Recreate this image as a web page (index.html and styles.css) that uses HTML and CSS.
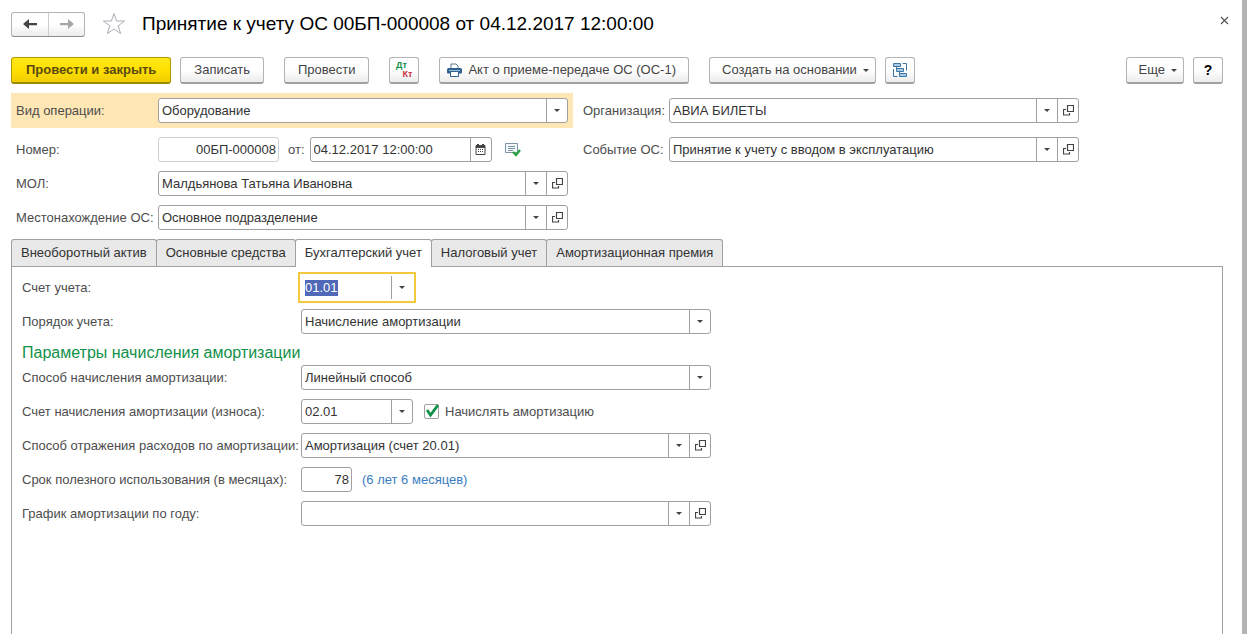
FILE: index.html
```html
<!DOCTYPE html>
<html lang="ru">
<head>
  <meta charset="UTF-8">
  <meta name="viewport" content="width=device-width, initial-scale=1.0">
  <title>Принятие к учету ОС</title>
  <link rel="stylesheet" href="styles.css">
</head>
<body>
  <svg class="sprite" aria-hidden="true">
    <symbol id="open" viewBox="0 0 11 11">
      <path d="M4.500 .5h6v6h-6z M3 4.500H.5v5.500h6V8" fill="none" stroke="#444" stroke-width="1.200"/>
    </symbol>
  </svg>

  <main class="window">
    <header class="title-bar">
      <div class="history">
        <button type="button" aria-label="Назад">
          <svg width="16" height="12" viewBox="0 0 16 12"><path d="M1 6l6-5v4h8v2.200H7V11z" fill="#444"/></svg>
        </button>
        <button type="button" aria-label="Вперед">
          <svg width="16" height="12" viewBox="0 0 16 12"><path d="M15 6L9 1v4H1v2.200h8V11z" fill="#a6a6a6"/></svg>
        </button>
      </div>
      <button type="button" class="star" aria-label="В избранное">
        <svg width="24" height="24" viewBox="0 0 24 24"><path d="M12 1.500l2.600 7.500h8l-6.400 4.800 2.400 7.800L12 17l-6.600 4.600 2.400-7.800L1.400 9h8z" fill="#fff" stroke="#a9adb5"/></svg>
      </button>
      <h1>Принятие к учету ОС 00БП-000008 от 04.12.2017 12:00:00</h1>
      <button type="button" class="close" aria-label="Закрыть">
        <svg width="9" height="9" viewBox="0 0 9 9"><path d="M1 1l7 7M8 1l-7 7" stroke="#555" stroke-width="1.200"/></svg>
      </button>
    </header>

    <div class="toolbar">
      <div class="group">
        <button type="button" class="btn primary">Провести и закрыть</button>
        <button type="button" class="btn">Записать</button>
      </div>
      <button type="button" class="btn">Провести</button>
      <button type="button" class="btn icon dtkt" aria-label="Показать проводки">
        <span class="dt">Дт</span>
        <span class="kt">Кт</span>
      </button>
      <button type="button" class="btn print">
        <svg width="15" height="14" viewBox="0 0 15 14">
          <path d="M4 6V1h5l2 2v3" fill="#fff" stroke="#5b7690"/>
          <path d="M1.500 5h12q1.500 0 1.500 1.500v3q0 1-1 1H1q-1 0-1-1v-3Q0 5 1.500 5z" fill="#2f5f8c"/>
          <path d="M3.500 8.500h8v5h-8z" fill="#fff" stroke="#2f5f8c"/>
          <path d="M2 7.500h11" stroke="#9fc0dc"/>
        </svg>
        Акт о приеме-передаче ОС (ОС-1)
      </button>
      <div class="group">
        <button type="button" class="btn menu">Создать на основании <span class="arrow"></span></button>
        <button type="button" class="btn icon" aria-label="Структура подчиненности">
          <svg width="16" height="16" viewBox="0 0 16 16" fill="#a9cbe6" stroke="#3f76a6">
            <path d="M10.500 1.500h4v7M1.500 7v7.500h4M4.500 4.500v4M7.500 10v3.500" fill="none"/>
            <path d="M1.500 1.500h7v3h-7zM4.500 6.500h7v3h-7zM7.500 11.500h7v3h-7z"/>
          </svg>
        </button>
      </div>
      <div class="group right">
        <button type="button" class="btn menu">Еще <span class="arrow"></span></button>
        <button type="button" class="btn icon help">?</button>
      </div>
    </div>

    <form class="document">
      <div class="head">
        <div class="column">
          <div class="row marked">
            <label for="operation">Вид операции:</label>
            <div class="field combo">
              <select id="operation"><option>Оборудование</option></select>
              <span class="drop"></span>
            </div>
          </div>
          <div class="row">
            <label for="number">Номер:</label>
            <div class="field number"><input id="number" type="text" value="00БП-000008"></div>
            <label for="date" class="from">от:</label>
            <div class="field date">
              <input id="date" type="text" value="04.12.2017 12:00:00">
              <button type="button" class="cell" aria-label="Выбрать дату">
                <svg width="11" height="11" viewBox="0 0 11 11">
                  <path d="M1 1.500h9v9H1z" fill="#fff" stroke="#444"/>
                  <path d="M1 1h9v3H1zM2 0h2v2H2zM7 0h2v2H7z" fill="#444"/>
                  <path d="M3 5.500h6M3 7.500h6" stroke="#444" stroke-dasharray="1 1"/>
                </svg>
              </button>
            </div>
            <svg class="posted" width="16" height="15" viewBox="0 0 16 15">
              <path d="M.5 1.500h12v9H.5z" fill="#f5f9fb" stroke="#7b96a8"/>
              <path d="M3 4.500h7M3 6.500h7M3 8.500h5" stroke="#7b96a8"/>
              <path d="M8 10l3 3 4-5" fill="none" stroke="#2ba343" stroke-width="2.400"/>
            </svg>
          </div>
          <div class="row">
            <label for="person">МОЛ:</label>
            <div class="field combo ref">
              <select id="person"><option>Малдьянова Татьяна Ивановна</option></select>
              <span class="drop"></span>
              <button type="button" class="cell" aria-label="Открыть"><svg width="11" height="11"><use href="#open"/></svg></button>
            </div>
          </div>
          <div class="row">
            <label for="place">Местонахождение ОС:</label>
            <div class="field combo ref">
              <select id="place"><option>Основное подразделение</option></select>
              <span class="drop"></span>
              <button type="button" class="cell" aria-label="Открыть"><svg width="11" height="11"><use href="#open"/></svg></button>
            </div>
          </div>
        </div>

        <div class="column second">
          <div class="row">
            <label for="company">Организация:</label>
            <div class="field combo ref">
              <select id="company"><option>АВИА БИЛЕТЫ</option></select>
              <span class="drop"></span>
              <button type="button" class="cell" aria-label="Открыть"><svg width="11" height="11"><use href="#open"/></svg></button>
            </div>
          </div>
          <div class="row">
            <label for="event">Событие ОС:</label>
            <div class="field combo ref">
              <select id="event"><option>Принятие к учету с вводом в эксплуатацию</option></select>
              <span class="drop"></span>
              <button type="button" class="cell" aria-label="Открыть"><svg width="11" height="11"><use href="#open"/></svg></button>
            </div>
          </div>
        </div>
      </div>

      <div class="tabs" role="tablist">
        <button type="button" role="tab">Внеоборотный актив</button>
        <button type="button" role="tab">Основные средства</button>
        <button type="button" role="tab" aria-selected="true">Бухгалтерский учет</button>
        <button type="button" role="tab">Налоговый учет</button>
        <button type="button" role="tab">Амортизационная премия</button>
      </div>

      <section class="panel" role="tabpanel">
        <div class="row">
          <label for="account">Счет учета:</label>
          <div class="field short active">
            <input id="account" type="text" value="01.01">
            <button type="button" class="cell" aria-label="Выбрать"><span class="arrow"></span></button>
          </div>
        </div>
        <div class="row">
          <label for="order">Порядок учета:</label>
          <div class="field combo">
            <select id="order"><option>Начисление амортизации</option></select>
            <span class="drop"></span>
          </div>
        </div>
        <h2>Параметры начисления амортизации</h2>
        <div class="row">
          <label for="method">Способ начисления амортизации:</label>
          <div class="field combo">
            <select id="method"><option>Линейный способ</option></select>
            <span class="drop"></span>
          </div>
        </div>
        <div class="row">
          <label for="wear">Счет начисления амортизации (износа):</label>
          <div class="field combo short">
            <select id="wear"><option>02.01</option></select>
            <span class="drop"></span>
          </div>
          <label class="check">
            <input type="checkbox" checked>
            <svg width="15" height="15" viewBox="0 0 15 15"><path d="M3 6l3.500 5L14 1" fill="none" stroke="#12914a" stroke-width="2.800"/></svg>
            Начислять амортизацию
          </label>
        </div>
        <div class="row">
          <label for="expense">Способ отражения расходов по амортизации:</label>
          <div class="field combo ref">
            <select id="expense"><option>Амортизация (счет 20.01)</option></select>
            <span class="drop"></span>
            <button type="button" class="cell" aria-label="Открыть"><svg width="11" height="11"><use href="#open"/></svg></button>
          </div>
        </div>
        <div class="row">
          <label for="months">Срок полезного использования (в месяцах):</label>
          <div class="field months"><input id="months" type="text" value="78"></div>
          <span class="hint">(6 лет 6 месяцев)</span>
        </div>
        <div class="row">
          <label for="schedule">График амортизации по году:</label>
          <div class="field combo ref">
            <select id="schedule"><option></option></select>
            <span class="drop"></span>
            <button type="button" class="cell" aria-label="Открыть"><svg width="11" height="11"><use href="#open"/></svg></button>
          </div>
        </div>
      </section>
    </form>
  </main>

  <script>
    document.getElementById('account').select();
  </script>
</body>
</html>
```
FILE: styles.css
```css
:root {
  --border: #a0a0a0;
  --text: #333;
  --label: #4d4d4d;
  --green: #12914a;
  --field-height: 25px;
}

* {
  box-sizing: border-box;
}

body {
  margin: 0;
  background: #fff;
  color: var(--text);
  font: 13px/16px "Liberation Sans", Arial, sans-serif;
}

button, input, select {
  margin: 0;
  padding: 0;
  border: 0;
  background: none;
  color: inherit;
  font: inherit;
}

svg {
  display: block;
  flex: none;
}

.sprite {
  display: none;
}

.window {
  display: flex;
  flex-direction: column;
  min-height: 100vh;
  padding: 9px 19px 0 11px;
  border-right: 5px solid #b4b4b4;
}

/* title */
.title-bar {
  display: flex;
  align-items: center;
  height: 30px;
}

.history {
  display: flex;
  border: 1px solid #b4b4b4;
  border-bottom-color: #8c8c8c;
  border-radius: 3px;
  background: linear-gradient(#fff 50%, #ececec);
}

.history button {
  display: flex;
  align-items: center;
  justify-content: center;
  width: 36px;
  height: 23px;
}

.history button + button {
  border-left: 1px solid #ccc;
}

.star {
  margin: 0 16px 0 17px;
}

h1 {
  flex: 1;
  margin: 0;
  color: #000;
  font-size: 19px;
  font-weight: normal;
  line-height: 22px;
  white-space: nowrap;
}

.close {
  margin: 0 -8px 8px 0;
  padding: 2px;
}

/* command bar */
.toolbar {
  display: flex;
  gap: 20px;
  margin-top: 18px;
}

.group {
  display: flex;
  gap: 9px;
}

.right {
  margin-left: auto;
}

.btn {
  display: flex;
  align-items: center;
  justify-content: center;
  gap: 6px;
  height: 27px;
  padding: 0 13px;
  border: 1px solid #b4b4b4;
  border-bottom: 2px solid #a0a0a0;
  border-radius: 3px;
  background: linear-gradient(#fff 50%, #ececec);
  color: #444;
  white-space: nowrap;
}

.primary {
  padding: 0 14px;
  border-color: #b09a00;
  border-bottom-color: #9c8800;
  background: linear-gradient(#ffe81a, #ffe000 50%, #f0cd00);
  color: #5a4a10;
  font-weight: bold;
}

.icon {
  width: 30px;
  padding: 0;
}

.print {
  padding: 0 12px 0 7px;
}

.menu {
  padding: 0 6px 0 12px;
}

.help {
  color: #000;
  font-size: 14px;
  font-weight: bold;
}

.dtkt {
  flex-direction: column;
  gap: 0;
  font-size: 9px;
  font-weight: bold;
  line-height: 9px;
}

.dt {
  margin-right: 6px;
  color: #12914a;
}

.kt {
  margin-left: 6px;
  color: #c9303e;
}

.arrow, .drop::before {
  content: "";
  border: 3px solid transparent;
  border-top-color: #444;
  border-bottom: 0;
}

/* document */
.document {
  display: flex;
  flex: 1;
  flex-direction: column;
}

.head {
  display: flex;
  gap: 10px;
  margin-top: 9px;
}

.column {
  display: flex;
  flex: 0 1 562px;
  flex-direction: column;
  gap: 9px;
}

.column .row {
  padding: 0 5px;
}

.column .marked {
  padding: 5px;
  background: #ffe6b5;
}

.column label:first-child {
  width: 142px;
}

.second {
  flex-basis: 496px;
  gap: 14px;
  padding-top: 5px;
}

.second .row {
  padding: 0;
}

.column.second label {
  width: 86px;
}

.row {
  display: flex;
  align-items: center;
}

.row label {
  flex: none;
  color: var(--label);
  white-space: nowrap;
}

.field {
  display: grid;
  flex: 0 1 410px;
  grid-template-columns: 1fr auto;
  height: var(--field-height);
  border: 1px solid var(--border);
  border-radius: 3px;
  background: #fff;
}

.field input, .field select {
  width: 100%;
  min-width: 0;
  padding: 0 3px;
  outline: 0;
}

.combo {
  grid-template-columns: 1fr 21px;
}

.combo.ref {
  grid-template-columns: 1fr 21px 21px;
}

.combo select {
  grid-row: 1;
  grid-column: 1 / 3;
  padding-right: 24px;
  appearance: none;
}

.drop {
  display: flex;
  grid-row: 1;
  grid-column: 2;
  align-items: center;
  justify-content: center;
  border-left: 1px solid var(--border);
  pointer-events: none;
}

.cell {
  display: flex;
  align-items: center;
  justify-content: center;
  width: 21px;
  border-left: 1px solid var(--border);
}

.number {
  flex-basis: 121px;
  border-color: #d0d0d0;
}

.number input, .months input {
  padding: 0 2px;
  text-align: right;
}

.row .from {
  margin: 0 5px 0 9px;
}

.date {
  flex-basis: 182px;
}

.posted {
  margin-left: 13px;
}

/* tabs */
.tabs {
  display: flex;
  margin-top: 9px;
}

.tabs button {
  height: 27px;
  margin-right: -1px;
  padding: 0 9px;
  border: 1px solid var(--border);
  border-bottom: 0;
  border-radius: 3px 3px 0 0;
  background: #e9e9e9;
  white-space: nowrap;
}

.tabs [aria-selected="true"] {
  z-index: 1;
  height: 28px;
  margin-bottom: -1px;
  padding-bottom: 1px;
  background: #fff;
}

.panel {
  display: flex;
  flex: 1;
  flex-direction: column;
  gap: 9px;
  padding: 8px 10px 0;
  border: 1px solid var(--border);
  border-bottom: 0;
}

.panel .row label:first-child {
  width: 279px;
}

.panel .short {
  flex-basis: 112px;
}

.panel .active {
  height: 31px;
  flex-basis: 118px;
  margin: -3px 0 -3px -3px;
  padding: 2px;
  border: 2px solid #f0c93c;
  border-radius: 0;
}

.active input::selection {
  background: #4f68b8;
  color: #fff;
}

h2 {
  margin: 0 0 -6px;
  color: var(--green);
  font-size: 16px;
  font-weight: normal;
  line-height: 19px;
}

.row .check {
  display: grid;
  grid-template-columns: 15px auto;
  gap: 6px;
  margin-left: 11px;
}

.check input, .check svg {
  grid-row: 1;
  grid-column: 1;
}

.check input {
  width: 15px;
  height: 15px;
  border: 1px solid var(--border);
  border-radius: 2px;
  appearance: none;
}

.check svg {
  z-index: 1;
  pointer-events: none;
}

.check input:not(:checked) + svg {
  visibility: hidden;
}

.months {
  flex-basis: 51px;
}

.hint {
  margin-left: 10px;
  color: #3b7dbf;
}
```
